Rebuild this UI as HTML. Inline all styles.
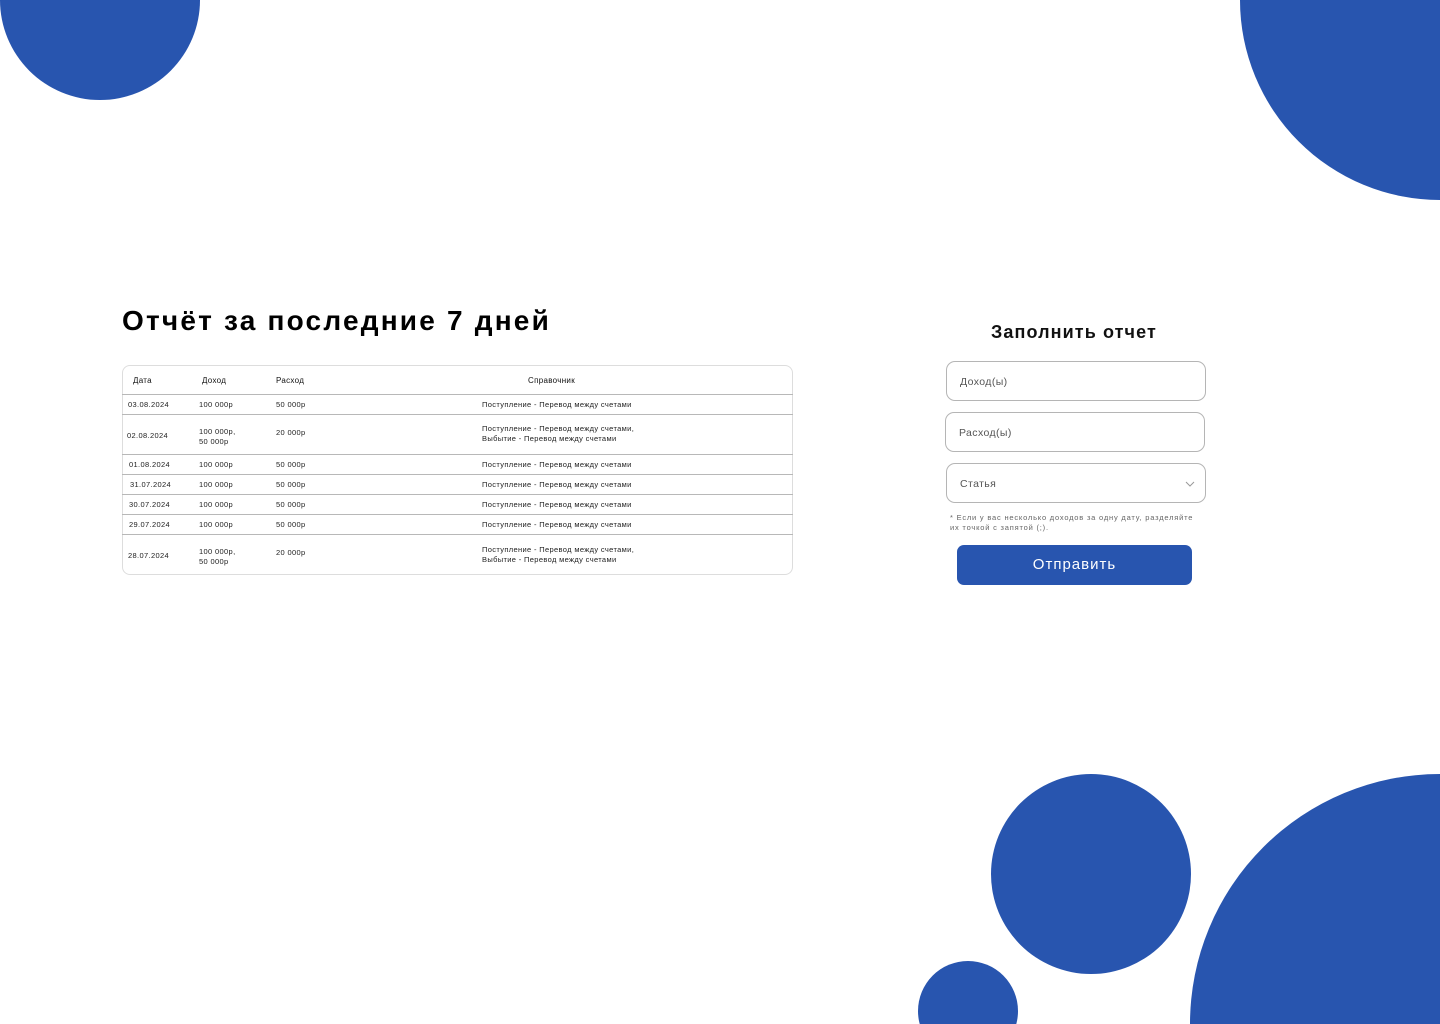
<!DOCTYPE html>
<html><head><meta charset="utf-8"><style>
*{margin:0;padding:0;box-sizing:border-box}
html,body{width:1440px;height:1024px;overflow:hidden}
body{background:#fff;font-family:"Liberation Sans","Noto Sans CJK SC",sans-serif;color:#111}
#w{position:relative;width:1440px;height:1024px;overflow:hidden}
.a{position:absolute;white-space:nowrap}
.t{font-size:7.5px;line-height:10px;color:#222;letter-spacing:0.35px}
.h{font-size:8px;line-height:10px;color:#111;letter-spacing:0.3px}
.ln{position:absolute;left:122px;width:671px;height:1px;background:#b8b8b8}
.inp{position:absolute;border:1px solid #b5b5b5;border-radius:9px;width:260px;height:40px;font-size:10.5px;color:#555;padding-left:13px;line-height:40px;letter-spacing:0.4px}
</style></head><body><div id="w">
<svg style="position:absolute;left:0;top:0" width="1440" height="1024" viewBox="0 0 1440 1024">
<g fill="#2855af">
<circle cx="100" cy="0" r="100"/>
<circle cx="1440" cy="0" r="200"/>
<circle cx="1091" cy="874" r="100"/>
<circle cx="968" cy="1011" r="50"/>
<circle cx="1440" cy="1024" r="250"/>
</g></svg>

<div class="a" style="left:122px;top:303px;font-size:28px;font-weight:bold;line-height:36px;letter-spacing:2.2px;color:#000">Отчёт за последние 7 дней</div>

<div style="position:absolute;left:122px;top:365px;width:671px;height:210px;border:1px solid #ddd;border-radius:8px"></div>
<div class="ln" style="top:394px"></div>
<div class="ln" style="top:414px"></div>
<div class="ln" style="top:454px"></div>
<div class="ln" style="top:474px"></div>
<div class="ln" style="top:494px"></div>
<div class="ln" style="top:514px"></div>
<div class="ln" style="top:534px"></div>

<div class="a h" style="left:133px;top:376px">Дата</div>
<div class="a h" style="left:202px;top:376px">Доход</div>
<div class="a h" style="left:276px;top:376px">Расход</div>
<div class="a h" style="left:528px;top:376px">Справочник</div>

<div class="a t" style="left:128px;top:400px">03.08.2024</div><div class="a t" style="left:199px;top:400px">100 000р</div><div class="a t" style="left:276px;top:400px">50 000р</div><div class="a t" style="left:482px;top:400px">Поступление - Перевод между счетами</div>

<div class="a t" style="left:127px;top:431px">02.08.2024</div><div class="a t" style="left:199px;top:427px">100 000р,<br>50 000р</div><div class="a t" style="left:276px;top:428px">20 000р</div><div class="a t" style="left:482px;top:424px">Поступление - Перевод между счетами,<br>Выбытие - Перевод между счетами</div>

<div class="a t" style="left:129px;top:460px">01.08.2024</div><div class="a t" style="left:199px;top:460px">100 000р</div><div class="a t" style="left:276px;top:460px">50 000р</div><div class="a t" style="left:482px;top:460px">Поступление - Перевод между счетами</div>
<div class="a t" style="left:130px;top:480px">31.07.2024</div><div class="a t" style="left:199px;top:480px">100 000р</div><div class="a t" style="left:276px;top:480px">50 000р</div><div class="a t" style="left:482px;top:480px">Поступление - Перевод между счетами</div>
<div class="a t" style="left:129px;top:500px">30.07.2024</div><div class="a t" style="left:199px;top:500px">100 000р</div><div class="a t" style="left:276px;top:500px">50 000р</div><div class="a t" style="left:482px;top:500px">Поступление - Перевод между счетами</div>
<div class="a t" style="left:129px;top:520px">29.07.2024</div><div class="a t" style="left:199px;top:520px">100 000р</div><div class="a t" style="left:276px;top:520px">50 000р</div><div class="a t" style="left:482px;top:520px">Поступление - Перевод между счетами</div>

<div class="a t" style="left:128px;top:551px">28.07.2024</div><div class="a t" style="left:199px;top:547px">100 000р,<br>50 000р</div><div class="a t" style="left:276px;top:548px">20 000р</div><div class="a t" style="left:482px;top:545px">Поступление - Перевод между счетами,<br>Выбытие - Перевод между счетами</div>

<div class="a" style="left:991px;top:321px;font-size:18px;font-weight:bold;line-height:22px;letter-spacing:1.1px;color:#111">Заполнить отчет</div>
<div class="inp" style="left:946px;top:361px">Доход(ы)</div>
<div class="inp" style="left:945px;top:412px">Расход(ы)</div>
<div class="inp" style="left:946px;top:463px">Статья
<svg style="position:absolute;right:10px;top:16px" width="10" height="8" viewBox="0 0 10 8"><path d="M1 2 L5 6 L9 2" fill="none" stroke="#999" stroke-width="1"/></svg></div>
<div class="a" style="left:950px;top:513px;font-size:7.5px;line-height:10px;color:#666;letter-spacing:0.8px">* Если у вас несколько доходов за одну дату, разделяйте<br>их точкой с запятой (;).</div>
<div style="position:absolute;left:957px;top:545px;width:235px;height:40px;border-radius:7px;background:#2855af;color:#fff;font-size:15px;text-align:center;line-height:40px;letter-spacing:1px">Отправить</div>
</div></body></html>
